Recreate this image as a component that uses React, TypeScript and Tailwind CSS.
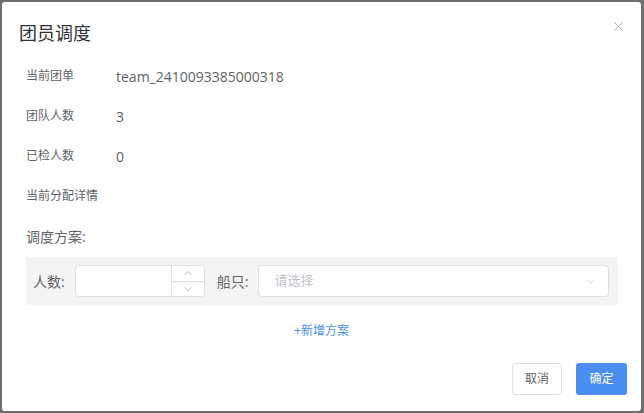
import { X, ChevronUp, ChevronDown } from "lucide-react"

const font = { fontFamily: '"Open Sans", "Noto Sans CJK SC", sans-serif' }

function InfoRow({ label, value }: { label: string; value?: string }) {
  return (
    <div className="flex h-[40px] items-center">
      <div className="w-[90px] text-[12px] text-[#606266]">{label}</div>
      {value && <div className="text-[14px] text-[#606266]">{value}</div>}
    </div>
  )
}

export default function App() {
  return (
    <div className="h-[413px] w-[644px] bg-[#6e6e6e] pl-[2px] pt-[2px]" style={font}>
      <div className="relative flex h-[409px] w-[639px] flex-col rounded-[3px] bg-white">
        {/* header */}
        <div className="flex h-[62px] items-center pl-[17px] pt-[1px]">
          <div className="text-[18px] text-[#303133]">团员调度</div>
        </div>
        <button className="absolute right-[15px] top-[17px] text-[#909399]">
          <X size={15} strokeWidth={1.3} />
        </button>

        {/* body */}
        <div className="px-[24px]">
          <div className="-mt-[8px]">
            <InfoRow label="当前团单" value="team_2410093385000318" />
            <InfoRow label="团队人数" value="3" />
            <InfoRow label="已检人数" value="0" />
            <InfoRow label="当前分配详情" />
          </div>
          <div className="flex h-[40px] items-center text-[14px] text-[#606266]">调度方案:</div>

          <div className="mt-[1px] flex h-[48px] w-[592px] items-center bg-[#f4f4f5] pl-[7px] pr-[9px]">
            <span className="text-[14px] text-[#606266]">人数:</span>
            <div className="ml-[10px] flex h-[32px] w-[130px] overflow-hidden rounded-[4px] border border-[#dcdfe6] bg-white">
              <div className="flex-1" />
              <div className="flex w-[33px] flex-col border-l border-[#dcdfe6] bg-white text-[#9a9ca3]">
                <div className="flex flex-1 items-center justify-center border-b border-[#dcdfe6]">
                  <ChevronUp size={12} strokeWidth={1.4} />
                </div>
                <div className="flex flex-1 items-center justify-center">
                  <ChevronDown size={12} strokeWidth={1.4} />
                </div>
              </div>
            </div>
            <span className="ml-[12px] text-[14px] text-[#606266]">船只:</span>
            <div className="ml-[10px] flex h-[32px] flex-1 items-center justify-between rounded-[4px] border border-[#dcdfe6] bg-white pl-[15px] pr-[10px]">
              <span className="text-[13px] text-[#c0c4cc]">请选择</span>
              <ChevronDown size={15} strokeWidth={1.2} className="text-[#c0c4cc]" />
            </div>
          </div>

          <div className="mt-[17px] flex justify-center">
            <span className="text-[12px] text-[#4a8ff0]">+新增方案</span>
          </div>
        </div>

        {/* footer */}
        <div className="mt-auto flex justify-end gap-[14px] pb-[16px] pr-[14px]">
          <button className="h-[32px] w-[50px] rounded-[3px] border border-[#dcdfe6] bg-white text-[12px] text-[#606266]">
            取消
          </button>
          <button className="h-[32px] w-[51px] rounded-[3px] bg-[#4a8ff0] text-[12px] text-white">确定</button>
        </div>
      </div>
    </div>
  )
}
